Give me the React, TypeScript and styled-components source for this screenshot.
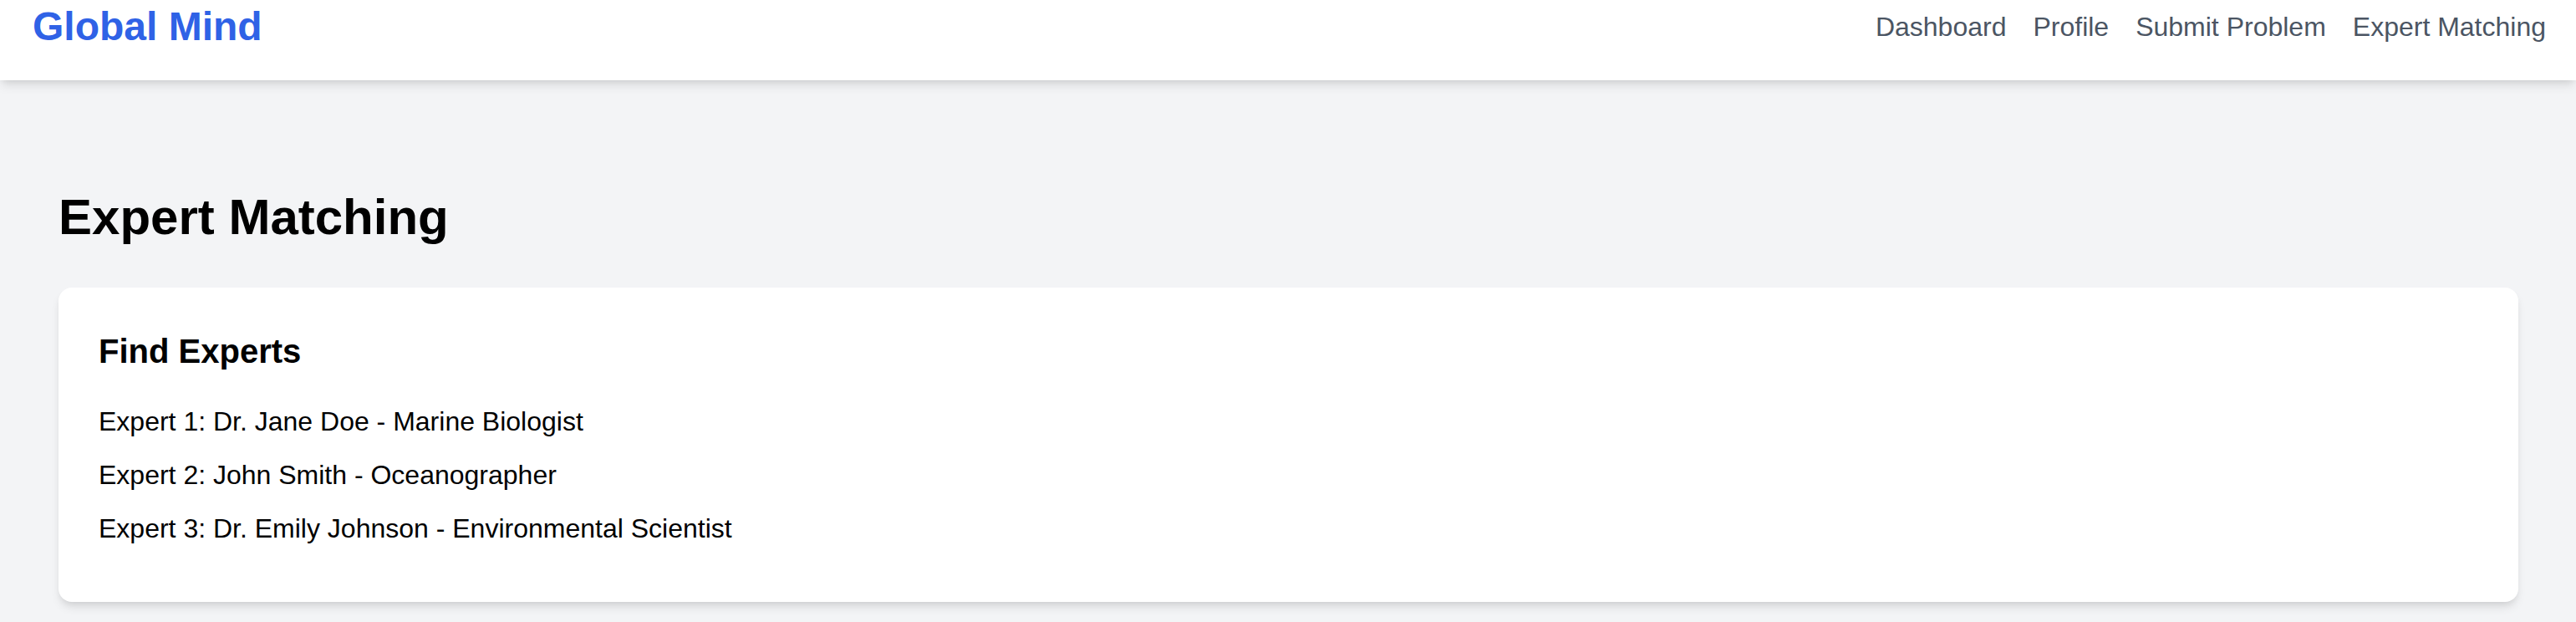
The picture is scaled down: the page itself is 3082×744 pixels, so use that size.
import React from "react";
import styled, { createGlobalStyle } from "styled-components";

const GlobalStyle = createGlobalStyle`
  html, body {
    margin: 0;
    padding: 0;
    background: #f3f4f6;
    font-family: "Liberation Sans", Arial, Helvetica, sans-serif;
    color: #000;
  }
  * { box-sizing: border-box; }
`;

const Page = styled.div`
  min-height: 744px;
  background: #f3f4f6;
`;

const Header = styled.header`
  position: relative;
  z-index: 1;
  height: 96px;
  background: #ffffff;
  padding: 0 36px 0 39px;
  display: flex;
  justify-content: space-between;
  align-items: flex-start;
  box-shadow: 0 8px 12px -2px rgba(0, 0, 0, 0.1), 0 4px 8px -4px rgba(0, 0, 0, 0.1);
`;

const Logo = styled.div`
  font-size: 48px;
  line-height: 64px;
  font-weight: 700;
  color: #2f62e6;
`;

const Nav = styled.nav`
  height: 64px;
  display: flex;
  align-items: center;
  gap: 32px;
`;

const NavLink = styled.a`
  font-size: 32px;
  line-height: 48px;
  color: #4b5563;
  text-decoration: none;
`;

const Main = styled.main`
  padding: 128px 69px 24px 70px;
`;

const Title = styled.h1`
  margin: 0 0 48px;
  font-size: 60px;
  line-height: 72px;
  font-weight: 700;
`;

const Card = styled.section`
  background: #ffffff;
  border-radius: 16px;
  padding: 48px;
  box-shadow: 0 8px 12px -2px rgba(0, 0, 0, 0.1), 0 4px 8px -4px rgba(0, 0, 0, 0.1);
`;

const CardTitle = styled.h2`
  margin: 0 0 32px;
  font-size: 40px;
  line-height: 56px;
  font-weight: 700;
`;

const ExpertItem = styled.p`
  margin: 0 0 16px;
  font-size: 32px;
  line-height: 48px;
`;

const experts = [
  "Expert 1: Dr. Jane Doe - Marine Biologist",
  "Expert 2: John Smith - Oceanographer",
  "Expert 3: Dr. Emily Johnson - Environmental Scientist",
];

export default function App() {
  return (
    <Page>
      <GlobalStyle />
      <Header>
        <Logo>Global Mind</Logo>
        <Nav>
          <NavLink href="#">Dashboard</NavLink>
          <NavLink href="#">Profile</NavLink>
          <NavLink href="#">Submit Problem</NavLink>
          <NavLink href="#">Expert Matching</NavLink>
        </Nav>
      </Header>
      <Main>
        <Title>Expert Matching</Title>
        <Card>
          <CardTitle>Find Experts</CardTitle>
          {experts.map((e) => (
            <ExpertItem key={e}>{e}</ExpertItem>
          ))}
        </Card>
      </Main>
    </Page>
  );
}
